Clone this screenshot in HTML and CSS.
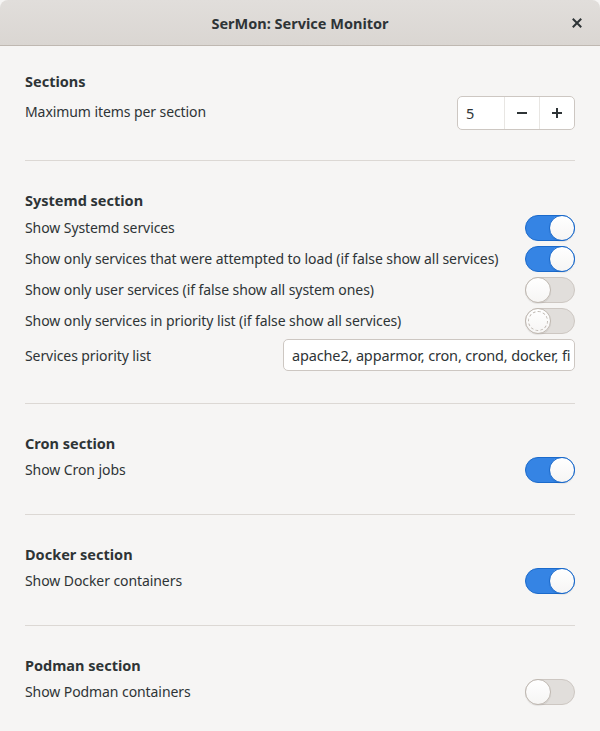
FILE: index.html
```html
<!DOCTYPE html>
<html>
<head>
<meta charset="utf-8">
<link rel="stylesheet" href="styles.css">
</head>
<body>
<div class="window">
  <header class="titlebar">
    <span class="title">SerMon: Service Monitor</span>
    <button class="close" aria-label="Close">
      <svg width="10" height="10" viewBox="0 0 10 10"><path d="M1.5 1.5 L8.5 8.5 M8.5 1.5 L1.5 8.5" stroke="#2e3436" stroke-width="2" stroke-linecap="square"/></svg>
    </button>
  </header>
  <main class="content">
    <section class="section first">
      <h2 class="heading">Sections</h2>
      <div class="row tall">
        <span class="label">Maximum items per section</span>
        <div class="spin">
          <span class="spin-value">5</span>
          <span class="spin-btn"><svg width="12" height="12" viewBox="0 0 12 12"><path d="M1 6 H11" stroke="#2e3436" stroke-width="2"/></svg></span>
          <span class="spin-btn"><svg width="12" height="12" viewBox="0 0 12 12"><path d="M1 6 H11 M6 1 V11" stroke="#2e3436" stroke-width="2"/></svg></span>
        </div>
      </div>
    </section>
    <section class="section systemd">
      <h2 class="heading">Systemd section</h2>
      <div class="row"><span class="label">Show Systemd services</span><span class="switch on"><span class="knob"></span></span></div>
      <div class="row"><span class="label">Show only services that were attempted to load (if false show all services)</span><span class="switch on"><span class="knob"></span></span></div>
      <div class="row"><span class="label">Show only user services (if false show all system ones)</span><span class="switch"><span class="knob"></span></span></div>
      <div class="row"><span class="label">Show only services in priority list (if false show all services)</span><span class="switch focus"><span class="knob"></span></span></div>
      <div class="row entry-row"><span class="label">Services priority list</span><div class="entry">apache2, apparmor, cron, crond, docker, fi</div></div>
    </section>
    <section class="section">
      <h2 class="heading">Cron section</h2>
      <div class="row"><span class="label">Show Cron jobs</span><span class="switch on"><span class="knob"></span></span></div>
    </section>
    <section class="section">
      <h2 class="heading">Docker section</h2>
      <div class="row"><span class="label">Show Docker containers</span><span class="switch on"><span class="knob"></span></span></div>
    </section>
    <section class="section last">
      <h2 class="heading">Podman section</h2>
      <div class="row"><span class="label">Show Podman containers</span><span class="switch"><span class="knob"></span></span></div>
    </section>
  </main>
</div>
</body>
</html>
```
FILE: styles.css
```css
* { box-sizing: border-box; }
html, body {
  margin: 0;
  padding: 0;
  width: 600px;
  height: 731px;
  overflow: hidden;
  background: #f6f5f4;
}
body {
  font-family: "Noto Sans", "Open Sans", sans-serif;
  font-size: 14px;
  color: #2e3436;
}
.window {
  width: 600px;
  height: 731px;
  background: #f6f5f4;
  border-radius: 8px 8px 0 0;
  overflow: hidden;
}
.titlebar {
  height: 46px;
  background: linear-gradient(#e1dedb, #dad6d2);
  border-bottom: 1px solid #bfb8b1;
  display: flex;
  align-items: center;
  justify-content: center;
  position: relative;
}
.title {
  font-weight: bold;
  font-size: 14.5px;
  color: #2e3436;
}
.close {
  position: absolute;
  right: 17px;
  top: 17px;
  width: 12px;
  height: 12px;
  padding: 0;
  border: 0;
  background: transparent;
  display: flex;
  align-items: center;
  justify-content: center;
}
.content {
  padding: 0 25px;
}
.section {
  padding: 29px 0 29px;
  border-bottom: 1px solid #dcd8d4;
}
.section.first { padding-top: 25px; }
.section.last { border-bottom: 0; }
.heading {
  margin: 0 0 1px;
  height: 20px;
  line-height: 20px;
  font-size: 14.5px;
  font-weight: bold;
}
.systemd .heading { margin-bottom: 2px; }
.row {
  height: 31px;
  display: flex;
  align-items: center;
  justify-content: space-between;
}
.row.tall { height: 39px; }
.row.entry-row { height: 38px; }
.label {
  white-space: nowrap;
  letter-spacing: -0.08px;
}
.spin {
  display: flex;
  width: 118px;
  height: 34px;
  border: 1px solid #cdc7c2;
  border-radius: 5px;
  background: #ffffff;
  margin-top: 2px;
}
.spin-value {
  flex: 1;
  display: flex;
  align-items: center;
  padding-left: 8px;
  font-size: 14.5px;
}
.spin-btn {
  width: 35px;
  display: flex;
  align-items: center;
  justify-content: center;
  border-left: 1px solid #e8e6e3;
}
.switch {
  position: relative;
  width: 50px;
  height: 26px;
  border-radius: 13px;
  background: #e1dedb;
  border: 1px solid #cdc7c2;
  flex: none;
}
.switch.on {
  background: #3584e4;
  border-color: #1b6acb;
}
.knob {
  position: absolute;
  top: -1px;
  left: -1px;
  width: 26px;
  height: 26px;
  border-radius: 50%;
  background: linear-gradient(#ffffff, #f6f5f4);
  border: 1px solid #bfb8b1;
  box-shadow: 0 1px 1px rgba(0,0,0,0.08);
}
.switch.on .knob {
  left: auto;
  right: -1px;
  border-color: #1b6acb;
}
.switch.focus .knob::after {
  content: "";
  position: absolute;
  inset: 2px;
  border-radius: 50%;
  border: 1px dashed #bdb6af;
}
.entry {
  width: 292px;
  height: 32px;
  border: 1px solid #cdc7c2;
  border-radius: 5px;
  background: #ffffff;
  padding: 0 8px;
  line-height: 30px;
  white-space: nowrap;
  overflow: hidden;
  font-size: 14.5px;
  letter-spacing: -0.15px;
}
```
